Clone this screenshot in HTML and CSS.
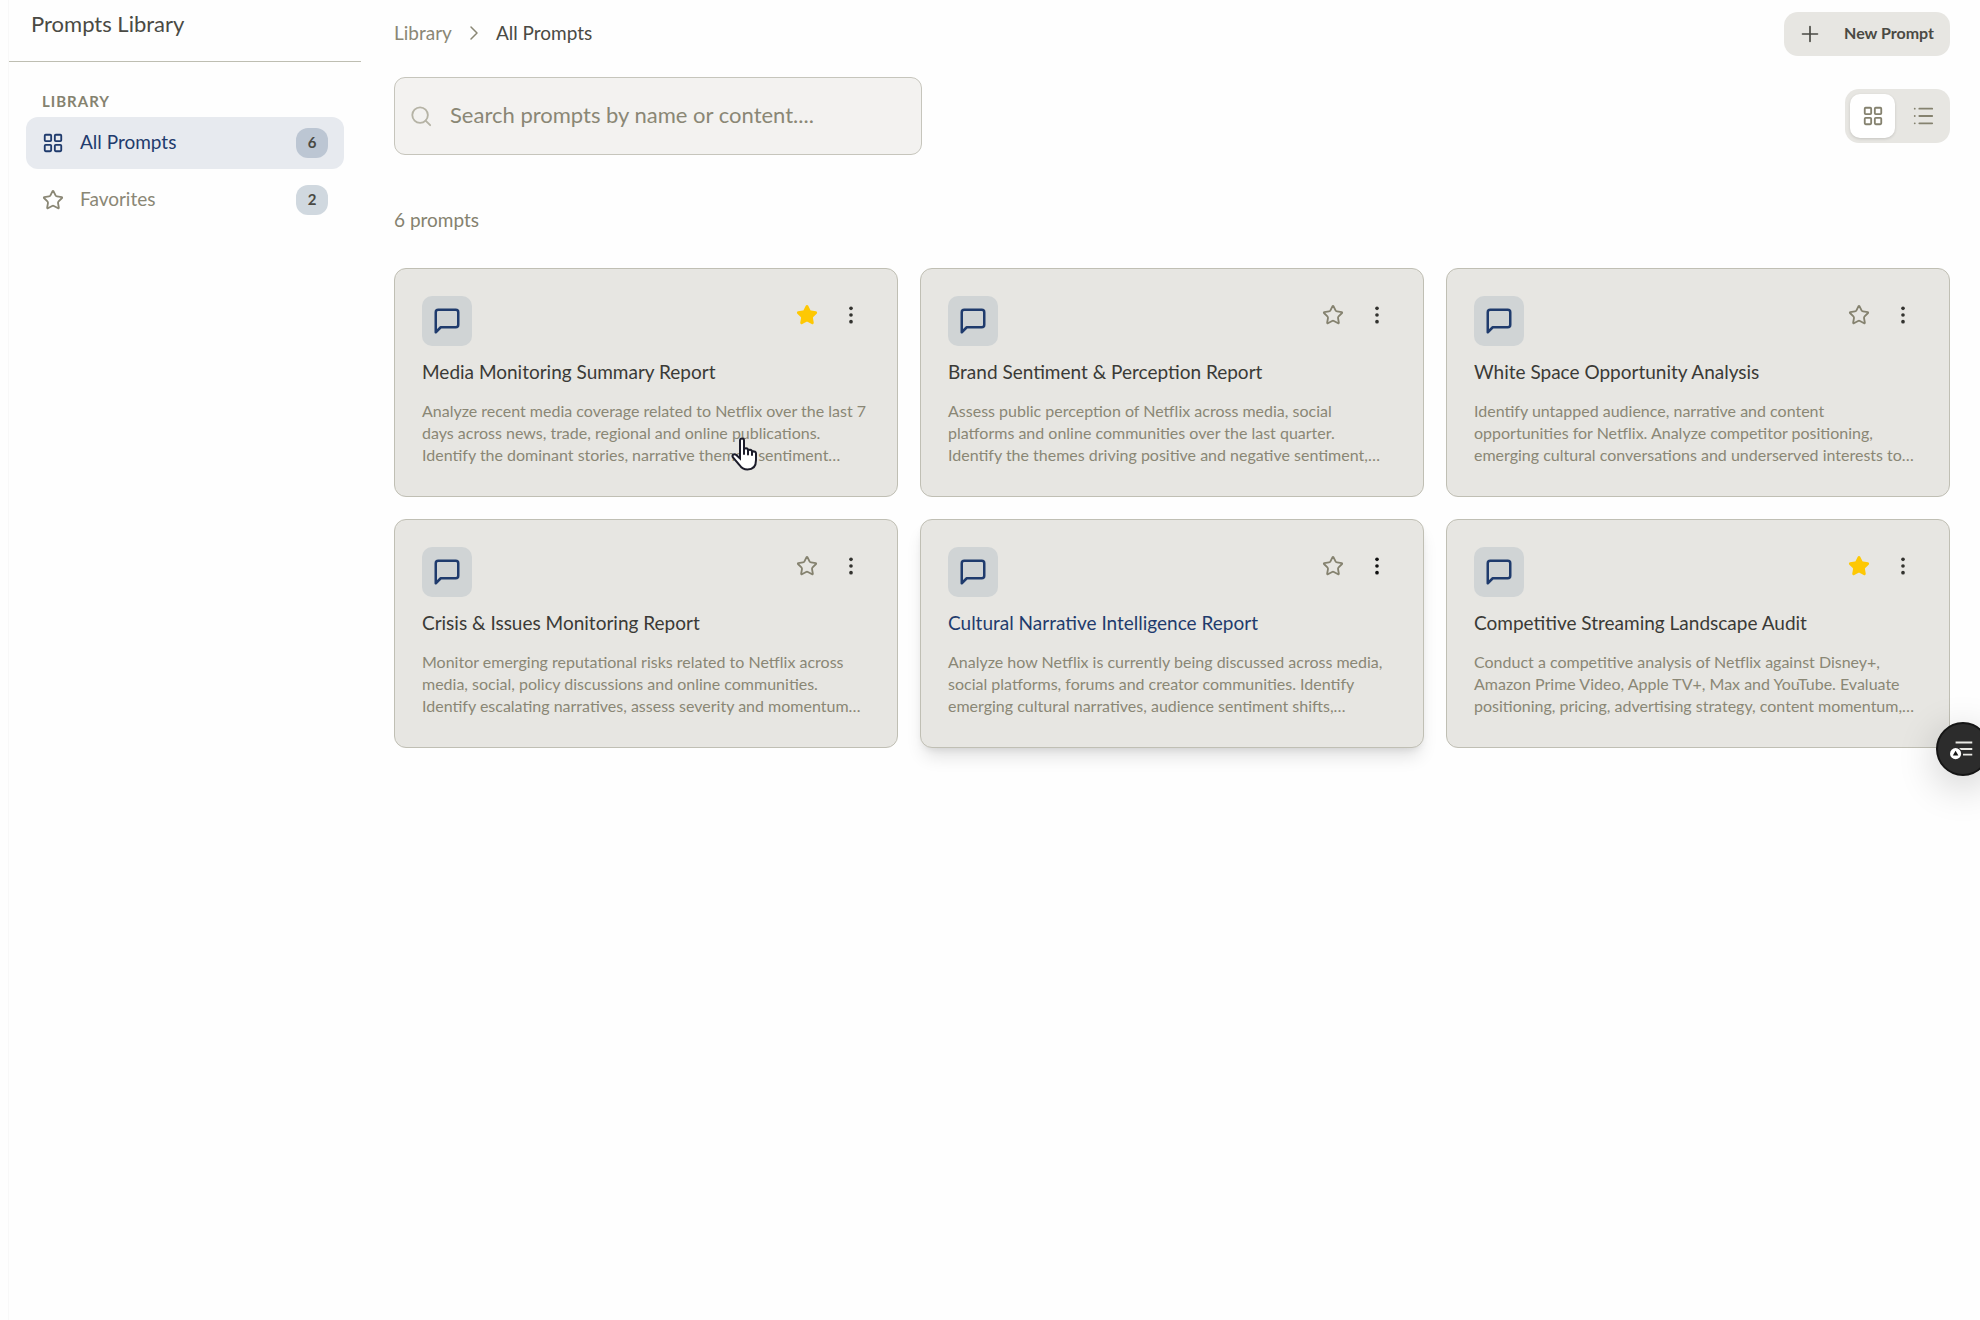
FILE: index.html
```
<!DOCTYPE html>
<html lang="en">
<head>
  <meta charset="UTF-8">
  <meta name="viewport" content="width=device-width, initial-scale=1.0">
  <title>Prompts Library</title>
  <link rel="stylesheet" href="styles.css">
</head>
<body>
  <svg class="sprite" aria-hidden="true">
    <symbol id="icon-grid" viewBox="0 0 24 24">
      <rect x="3" y="3" width="7" height="7" rx="1"/>
      <rect x="14" y="3" width="7" height="7" rx="1"/>
      <rect x="14" y="14" width="7" height="7" rx="1"/>
      <rect x="3" y="14" width="7" height="7" rx="1"/>
    </symbol>
    <symbol id="icon-star" viewBox="0 0 24 24">
      <path d="M11.525 2.295a.53.53 0 0 1 .95 0l2.31 4.679a2.123 2.123 0 0 0 1.595 1.16l5.166.756a.53.53 0 0 1 .294.904l-3.736 3.638a2.123 2.123 0 0 0-.611 1.878l.882 5.14a.53.53 0 0 1-.771.56l-4.618-2.428a2.122 2.122 0 0 0-1.973 0L6.396 21.01a.53.53 0 0 1-.77-.56l.881-5.139a2.122 2.122 0 0 0-.611-1.879L2.16 9.795a.53.53 0 0 1 .294-.906l5.165-.755a2.122 2.122 0 0 0 1.597-1.16z"/>
    </symbol>
    <symbol id="icon-message" viewBox="0 0 24 24">
      <path d="M21 15a2 2 0 0 1-2 2H7l-4 4V5a2 2 0 0 1 2-2h14a2 2 0 0 1 2 2z"/>
    </symbol>
    <symbol id="icon-dots" viewBox="0 0 24 24">
      <circle cx="12" cy="4" r="2.2"/>
      <circle cx="12" cy="12" r="2.2"/>
      <circle cx="12" cy="20" r="2.2"/>
    </symbol>
  </svg>

  <div class="layout">
    <aside class="sidebar">
      <h1 class="sidebar-title">Prompts Library</h1>
      <nav class="sidebar-nav">
        <h2 class="nav-label">LIBRARY</h2>
        <a class="nav-item active" href="#all">
          <svg class="icon"><use href="#icon-grid"/></svg>
          <span class="name">All Prompts</span>
          <span class="badge">6</span>
        </a>
        <a class="nav-item" href="#favorites">
          <svg class="icon"><use href="#icon-star"/></svg>
          <span class="name">Favorites</span>
          <span class="badge">2</span>
        </a>
      </nav>
    </aside>

    <main class="main">
      <header class="header">
        <nav class="breadcrumb">
          <a href="#library">Library</a>
          <svg class="icon" viewBox="0 0 24 24"><path d="m8 4 8 8-8 8"/></svg>
          <span class="current">All Prompts</span>
        </nav>
        <button class="btn-new">
          <svg class="icon" viewBox="0 0 24 24"><path d="M3 12h18M12 3v18"/></svg>
          <span>New Prompt</span>
        </button>
      </header>

      <div class="toolbar">
        <label class="search">
          <svg class="icon" viewBox="0 0 24 24"><circle cx="11" cy="11" r="8.5"/><path d="m17 17 5 5"/></svg>
          <input type="text" placeholder="Search prompts by name or content...." aria-label="Search prompts">
        </label>
        <div class="view-toggle">
          <button class="active" aria-label="Grid view"><svg class="icon"><use href="#icon-grid"/></svg></button>
          <button aria-label="List view"><svg class="icon" viewBox="0 0 24 24"><path d="M8 4h14M8 12h14M8 20h14M3 4h.01M3 12h.01M3 20h.01"/></svg></button>
        </div>
      </div>

      <p class="count">6 prompts</p>

      <div class="cards">
        <article class="card">
          <div class="card-top">
            <span class="card-icon"><svg class="icon"><use href="#icon-message"/></svg></span>
            <button class="star on" aria-label="Favorite"><svg class="icon"><use href="#icon-star"/></svg></button>
            <button class="more" aria-label="More"><svg class="icon"><use href="#icon-dots"/></svg></button>
          </div>
          <h3>Media Monitoring Summary Report</h3>
          <p>Analyze recent media coverage related to Netflix over the last 7<br>days across news, trade, regional and online publications.<br>Identify the dominant stories, narrative themes, sentiment…</p>
          <svg class="cursor" viewBox="0 0 27 34" aria-hidden="true">
            <path d="M9 3.5C9 .8 13 .8 13 3.500V13c0-2.500 4-2.300 4 .3v.9c.2-2.200 4-2 4 .5v1c.3-2 4-1.700 4 .8v6.500c0 6.500-3 9.500-8.500 9.500-4 0-6.300-1.800-8-4.500L2 20.500c-1.600-2.500 1.300-4.300 3.300-2.500L9 21.500z"/>
            <path d="M13 12v5M17 13v4.500M21 14.500V18"/>
          </svg>
        </article>

        <article class="card">
          <div class="card-top">
            <span class="card-icon"><svg class="icon"><use href="#icon-message"/></svg></span>
            <button class="star" aria-label="Favorite"><svg class="icon"><use href="#icon-star"/></svg></button>
            <button class="more" aria-label="More"><svg class="icon"><use href="#icon-dots"/></svg></button>
          </div>
          <h3>Brand Sentiment &amp; Perception Report</h3>
          <p>Assess public perception of Netflix across media, social<br>platforms and online communities over the last quarter.<br>Identify the themes driving positive and negative sentiment,…</p>
        </article>

        <article class="card">
          <div class="card-top">
            <span class="card-icon"><svg class="icon"><use href="#icon-message"/></svg></span>
            <button class="star" aria-label="Favorite"><svg class="icon"><use href="#icon-star"/></svg></button>
            <button class="more" aria-label="More"><svg class="icon"><use href="#icon-dots"/></svg></button>
          </div>
          <h3>White Space Opportunity Analysis</h3>
          <p>Identify untapped audience, narrative and content<br>opportunities for Netflix. Analyze competitor positioning,<br>emerging cultural conversations and underserved interests to…</p>
        </article>

        <article class="card">
          <div class="card-top">
            <span class="card-icon"><svg class="icon"><use href="#icon-message"/></svg></span>
            <button class="star" aria-label="Favorite"><svg class="icon"><use href="#icon-star"/></svg></button>
            <button class="more" aria-label="More"><svg class="icon"><use href="#icon-dots"/></svg></button>
          </div>
          <h3>Crisis &amp; Issues Monitoring Report</h3>
          <p>Monitor emerging reputational risks related to Netflix across<br>media, social, policy discussions and online communities.<br>Identify escalating narratives, assess severity and momentum…</p>
        </article>

        <article class="card hovered">
          <div class="card-top">
            <span class="card-icon"><svg class="icon"><use href="#icon-message"/></svg></span>
            <button class="star" aria-label="Favorite"><svg class="icon"><use href="#icon-star"/></svg></button>
            <button class="more" aria-label="More"><svg class="icon"><use href="#icon-dots"/></svg></button>
          </div>
          <h3>Cultural Narrative Intelligence Report</h3>
          <p>Analyze how Netflix is currently being discussed across media,<br>social platforms, forums and creator communities. Identify<br>emerging cultural narratives, audience sentiment shifts,…</p>
        </article>

        <article class="card">
          <div class="card-top">
            <span class="card-icon"><svg class="icon"><use href="#icon-message"/></svg></span>
            <button class="star on" aria-label="Favorite"><svg class="icon"><use href="#icon-star"/></svg></button>
            <button class="more" aria-label="More"><svg class="icon"><use href="#icon-dots"/></svg></button>
          </div>
          <h3>Competitive Streaming Landscape Audit</h3>
          <p>Conduct a competitive analysis of Netflix against Disney+,<br>Amazon Prime Video, Apple TV+, Max and YouTube. Evaluate<br>positioning, pricing, advertising strategy, content momentum,…</p>
        </article>
      </div>
    </main>
  </div>

  <button class="fab" aria-label="Open panel">
    <svg viewBox="0 0 54 54">
      <path class="lines" d="M19 20h18M23 27h14M27 33h10"/>
      <circle cx="19" cy="32" r="7"/>
      <circle class="dot" cx="19" cy="32" r="6"/>
      <path class="mark" d="m19 29 3 5h-6z"/>
    </svg>
  </button>
</body>
</html>
```
FILE: styles.css
```
* {
  box-sizing: border-box;
}

body {
  margin: 0;
  font-family: Lato, "Open Sans", sans-serif;
  font-size: 19px;
  color: #4a4a44;
  background-color: #fefefe;
  overflow-x: hidden;
}

h1, h2, h3, p {
  margin: 0;
  font-weight: 400;
}

a {
  color: inherit;
  text-decoration: none;
}

button {
  padding: 0;
  font-family: inherit;
  color: inherit;
  background: none;
  border: 0;
  cursor: pointer;
}

.sprite {
  display: none;
}

.icon {
  display: block;
  flex: none;
  width: 22px;
  height: 22px;
  fill: none;
  stroke: currentColor;
  stroke-width: 2;
  stroke-linecap: round;
  stroke-linejoin: round;
}

.layout {
  display: flex;
  min-height: 100vh;
}

/* sidebar */
.sidebar {
  flex: none;
  width: 353px;
  margin-left: 8px;
  border-left: 1px solid #f8f8f8;
}

.sidebar-title {
  height: 62px;
  padding: 11px 22px 0;
  font-size: 22px;
  line-height: 26px;
  border-bottom: 1px solid #bebeb2;
}

.sidebar-nav {
  display: flex;
  flex-direction: column;
  padding: 28px 17px;
}

.nav-label {
  padding: 0 16px;
  margin-bottom: 5px;
  font-size: 15px;
  font-weight: 700;
  line-height: 22px;
  letter-spacing: 1px;
  color: #85826f;
}

.nav-item {
  display: flex;
  align-items: center;
  height: 52px;
  margin-bottom: 5px;
  padding: 0 16px;
  color: #8a8775;
  border-radius: 12px;
}

.nav-item .icon {
  margin-right: 16px;
}

.nav-item .name {
  padding-bottom: 3px;
}

.nav-item.active {
  color: #1f3b6d;
  background-color: #e7eaef;
}

.badge {
  margin-left: auto;
  width: 32px;
  height: 30px;
  font-size: 15px;
  font-weight: 700;
  line-height: 28px;
  text-align: center;
  color: #4a4a44;
  background-color: #d0d8df;
  border-radius: 12px;
}

.active .badge {
  background-color: #bcc6d3;
}

/* main */
.main {
  flex: 1;
  min-width: 0;
  padding: 12px 30px 30px 33px;
}

.header {
  display: flex;
  justify-content: space-between;
  align-items: center;
  height: 44px;
}

.breadcrumb {
  display: flex;
  align-items: center;
  gap: 13px;
  height: 44px;
  padding-bottom: 3px;
  color: #8a8775;
}

.breadcrumb .icon {
  width: 18px;
  height: 18px;
}

.breadcrumb .current {
  color: #4a4a44;
}

.btn-new {
  display: flex;
  align-items: center;
  gap: 24px;
  height: 44px;
  padding: 0 16px;
  font-size: 16px;
  font-weight: 700;
  background-color: #e7e6e2;
  border-radius: 14px;
}

.btn-new .icon {
  width: 20px;
  height: 20px;
}

.btn-new span {
  padding-bottom: 3px;
}

.toolbar {
  display: flex;
  justify-content: space-between;
  align-items: center;
  margin-top: 21px;
}

.search {
  display: flex;
  align-items: center;
  gap: 18px;
  width: 528px;
  height: 78px;
  padding: 0 15px;
  background-color: #f3f2f0;
  border: 1px solid #c6c5bc;
  border-radius: 11px;
}

.search .icon {
  color: #b5b3a5;
}

.search input {
  flex: 1;
  min-width: 0;
  padding: 0 0 3px;
  font-family: inherit;
  font-size: 22px;
  color: #4a4a44;
  background: none;
  border: 0;
  outline: none;
}

.search input::placeholder {
  color: #8a8775;
  opacity: 1;
}

.view-toggle {
  display: flex;
  gap: 5px;
  padding: 5px;
  background-color: #e7e6e2;
  border-radius: 14px;
}

.view-toggle button {
  display: flex;
  justify-content: center;
  align-items: center;
  width: 45px;
  height: 44px;
  color: #85826f;
  border-radius: 10px;
}

.view-toggle .active {
  background-color: #fff;
  box-shadow: 0 1px 3px rgba(0, 0, 0, 0.15);
}

.count {
  margin: 52px 0 35px;
  line-height: 26px;
  color: #85826f;
}

.cards {
  display: grid;
  grid-template-columns: repeat(3, minmax(0, 1fr));
  gap: 22px;
}

.card {
  position: relative;
  padding: 27px;
  background-color: #e7e6e2;
  border: 1px solid #c0bfb4;
  border-radius: 12px;
}

.card.hovered {
  box-shadow: 0 12px 18px -4px rgba(0, 0, 0, 0.12), 0 4px 8px -4px rgba(0, 0, 0, 0.12);
}

.card-top {
  display: flex;
  align-items: flex-start;
  margin-right: -3px;
}

.card-icon {
  display: flex;
  justify-content: center;
  align-items: center;
  width: 50px;
  height: 50px;
  margin-right: auto;
  color: #1f3b6d;
  background-color: #d0d4d5;
  border-radius: 10px;
}

.card-icon .icon {
  width: 30px;
  height: 30px;
}

.star,
.more {
  display: flex;
  justify-content: center;
  align-items: center;
  width: 44px;
  height: 38px;
}

.star {
  color: #85826f;
}

.star.on {
  color: #fec804;
}

.star.on .icon {
  fill: currentColor;
}

.more .icon {
  fill: #33332f;
  stroke: none;
  height: 20px;
}

.card h3 {
  margin-top: 12px;
  line-height: 28px;
  font-size: 19px;
  color: #3a3a36;
  white-space: nowrap;
}

.card p {
  margin: 14px 0 3px;
  font-size: 16px;
  line-height: 22px;
  color: #8a8775;
  white-space: nowrap;
}

.card.hovered h3 {
  color: #1f3b6d;
}

.card.hovered .more .icon {
  fill: #111;
}

.cursor {
  position: absolute;
  top: 168px;
  left: 336px;
  width: 27px;
  height: 34px;
  fill: #fff;
  stroke: #1c1c2a;
  stroke-width: 2;
  stroke-linecap: round;
}

/* floating button on the window edge */
.fab {
  position: fixed;
  top: 722px;
  right: -10px;
  width: 54px;
  height: 54px;
  background-color: #2c2c2c;
  border: 2px solid #151515;
  border-radius: 50%;
  box-shadow: 0 10px 40px rgba(0, 0, 0, 0.2);
}

.fab svg {
  display: block;
  width: 50px;
  height: 50px;
  fill: #2c2c2c;
}

.fab .lines {
  stroke: #e8e8e4;
  stroke-width: 2;
}

.fab .dot {
  fill: #fff;
}

.fab .mark {
  fill: #151515;
}
```
